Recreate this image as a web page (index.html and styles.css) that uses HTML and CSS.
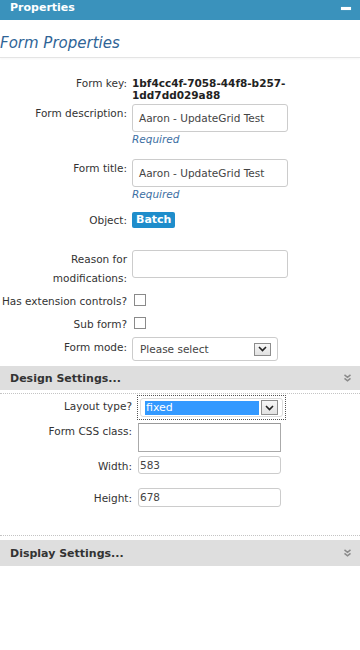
FILE: index.html
```html
<!DOCTYPE html>
<html lang="en">
<head>
  <meta charset="UTF-8">
  <meta name="viewport" content="width=device-width, initial-scale=1.0">
  <title>Properties</title>
  <link rel="stylesheet" href="styles.css">
</head>
<body>
  <div class="panel-head">
    <span>Properties</span>
    <span class="minus"></span>
  </div>
  <h1 class="page-title">Form Properties</h1>

  <div class="form">
    <div class="row row-key">
      <label>Form key:</label>
      <div class="key-value">1bf4cc4f-7058-44f8-b257-1dd7dd029a88</div>
    </div>
    <div class="row row-desc">
      <label class="pad3">Form description:</label>
      <div>
        <div class="text-input big">Aaron - UpdateGrid Test</div>
        <div class="required">Required</div>
      </div>
    </div>
    <div class="row row-title">
      <label class="pad3">Form title:</label>
      <div>
        <div class="text-input big">Aaron - UpdateGrid Test</div>
        <div class="required">Required</div>
      </div>
    </div>
    <div class="row row-object">
      <label class="pad2">Object:</label>
      <div><span class="badge">Batch</span></div>
    </div>
    <div class="row row-reason">
      <label class="tall">Reason for modifications:</label>
      <div><div class="text-input big"></div></div>
    </div>
    <div class="row row-ext">
      <label class="pad1">Has extension controls?</label>
      <div><span class="checkbox"></span></div>
    </div>
    <div class="row row-sub">
      <label class="pad1">Sub form?</label>
      <div><span class="checkbox"></span></div>
    </div>
    <div class="row row-mode">
      <label class="pad4">Form mode:</label>
      <div>
        <div class="select">
          <span>Please select</span>
          <span class="drop-btn">
            <svg width="9" height="6" viewBox="0 0 9 6"><path d="M1 1 L4.5 4.5 L8 1" fill="none" stroke="#222" stroke-width="1.6"/></svg>
          </span>
        </div>
      </div>
    </div>
  </div>

  <div class="section-head">
    <span>Design Settings...</span>
    <svg class="chev" width="7" height="8" viewBox="0 0 7 8"><path d="M0.5 0.8 L3.5 3.3 L6.5 0.8 M0.5 4.3 L3.5 6.8 L6.5 4.3" fill="none" stroke="#8a8a8a" stroke-width="1.5"/></svg>
  </div>
  <div class="section-body">
    <div class="row wide row-layout">
      <label class="pad5">Layout type?</label>
      <div>
        <div class="focus-box">
          <div class="select-fixed">
            <span class="selected">fixed</span>
            <span class="drop-btn">
              <svg width="9" height="6" viewBox="0 0 9 6"><path d="M1 1 L4.5 4.5 L8 1" fill="none" stroke="#222" stroke-width="1.6"/></svg>
            </span>
          </div>
        </div>
      </div>
    </div>
    <div class="row wide row-css">
      <label class="pad2">Form CSS class:</label>
      <div><div class="textarea"></div></div>
    </div>
    <div class="row wide row-width">
      <label class="pad4">Width:</label>
      <div><div class="text-input small">583</div></div>
    </div>
    <div class="row wide row-height">
      <label class="pad4">Height:</label>
      <div><div class="text-input small tall19">678</div></div>
    </div>
  </div>

  <div class="section-head second">
    <span>Display Settings...</span>
    <svg class="chev" width="7" height="8" viewBox="0 0 7 8"><path d="M0.5 0.8 L3.5 3.3 L6.5 0.8 M0.5 4.3 L3.5 6.8 L6.5 4.3" fill="none" stroke="#8a8a8a" stroke-width="1.5"/></svg>
  </div>
</body>
</html>
```

FILE: styles.css
```css
body {
  margin: 0;
  font-family: "DejaVu Sans", Verdana, sans-serif;
  font-size: 10.5px;
  color: #333;
  background-color: #fff;
}
.panel-head {
  height: 20px;
  background-color: #3a92bc;
  color: #fff;
  font-size: 11px;
  font-weight: bold;
  display: flex;
  justify-content: space-between;
  align-items: flex-start;
  padding: 1px 9px 0 10px;
  box-sizing: border-box;
  line-height: 13px;
}
.panel-head .minus {
  width: 10px;
  height: 3px;
  margin-top: 6px;
  background-color: #fff;
  box-shadow: 0 0 1px rgba(255, 255, 255, 0.6);
}
.page-title {
  margin: 0;
  padding: 14px 0 5px 0;
  line-height: 18px;
  font-size: 15px;
  font-weight: normal;
  font-style: italic;
  color: #2f6496;
  border-bottom: 1px solid #e4e4e4;
  box-shadow: 0 1px 2px rgba(0, 0, 0, 0.04);
}
.form {
  padding-top: 19px;
}
.row {
  display: grid;
  grid-template-columns: 127px 170px;
  column-gap: 5px;
}
.row label {
  text-align: right;
  line-height: 12px;
  white-space: nowrap;
}
.row label.tall {
  white-space: normal;
  line-height: 19px;
}
.pad1 { padding-top: 1px; }
.pad2 { padding-top: 2px; }
.pad3 { padding-top: 3px; }
.pad4 { padding-top: 4px; }
.pad5 { padding-top: 5px; }

.key-value {
  font-weight: bold;
  line-height: 12px;
  width: 160px;
  color: #222;
}
.row-key { margin-bottom: 3px; }
.row-desc { margin-bottom: 14px; }
.row-title { margin-bottom: 12px; }
.row-object { margin-bottom: 22px; }
.row-reason { margin-bottom: 6px; }
.row-ext { margin-bottom: 10px; }
.row-sub { margin-bottom: 7px; }
.row-mode { margin-bottom: 5px; }

.text-input {
  box-sizing: border-box;
  border: 1px solid #ccc;
  border-radius: 3px;
  background-color: #fff;
  color: #444;
  white-space: nowrap;
}
.text-input.big {
  width: 156px;
  height: 28px;
  line-height: 26px;
  padding-left: 6px;
}
.text-input.small {
  width: 143px;
  height: 18px;
  line-height: 17px;
  padding-left: 1px;
  margin-left: 1px;
}
.text-input.tall19 {
  height: 19px;
}
.required {
  margin-top: 1px;
  line-height: 12px;
  font-style: italic;
  color: #3d6fa3;
}
.badge {
  display: inline-block;
  height: 16px;
  line-height: 16px;
  padding: 0 4px;
  background-color: #1f8dcb;
  color: #fff;
  font-size: 11px;
  font-weight: bold;
  border-radius: 2px;
}
.checkbox {
  display: block;
  width: 12px;
  height: 12px;
  margin-left: 2px;
  box-sizing: border-box;
  border: 1px solid #8a8a8a;
  background-color: #fff;
}
.select {
  width: 146px;
  height: 24px;
  box-sizing: border-box;
  border: 1px solid #ccc;
  border-radius: 3px;
  display: flex;
  align-items: center;
  justify-content: space-between;
  padding: 0 6px 0 7px;
  color: #444;
}
.drop-btn {
  width: 17px;
  height: 13px;
  box-sizing: border-box;
  border: 1px solid #8d8d8d;
  background: linear-gradient(#f7f7f7, #e2e2e2);
  display: flex;
  align-items: center;
  justify-content: center;
}

.section-head {
  height: 24px;
  background-color: #dedede;
  display: flex;
  justify-content: space-between;
  align-items: center;
  padding: 0 9px 0 10px;
  font-size: 11px;
  font-weight: bold;
  color: #333;
}
.section-head.second {
  height: 26px;
  margin-top: 4px;
}
.section-body {
  margin-top: 3px;
  padding: 1px 0 28px 0;
  border-top: 1px dotted #c4c4c4;
  border-bottom: 1px dotted #c4c4c4;
}
.row.wide {
  grid-template-columns: 132px 170px;
}
.row-layout { margin-bottom: 3px; }
.row-css { margin-bottom: 4px; }
.row-width { margin-bottom: 14px; }

.focus-box {
  width: 149px;
  height: 25px;
  box-sizing: border-box;
  border: 1px dotted #555;
  padding: 2px;
}
.select-fixed {
  height: 19px;
  box-sizing: border-box;
  border: 1px solid #ddd;
  border-radius: 3px;
  display: flex;
  align-items: center;
  padding: 0 4px 0 4px;
  gap: 2px;
}
.selected {
  flex: 1;
  height: 14px;
  line-height: 14px;
  background-color: #3399ff;
  color: #fff;
  font-size: 11px;
  padding-left: 1px;
}
.select-fixed .drop-btn {
  height: 15px;
}
.textarea {
  width: 143px;
  height: 29px;
  box-sizing: border-box;
  margin-left: 1px;
  border: 1px solid #aaa;
  border-top-color: #999;
  background-color: #fff;
}
```
